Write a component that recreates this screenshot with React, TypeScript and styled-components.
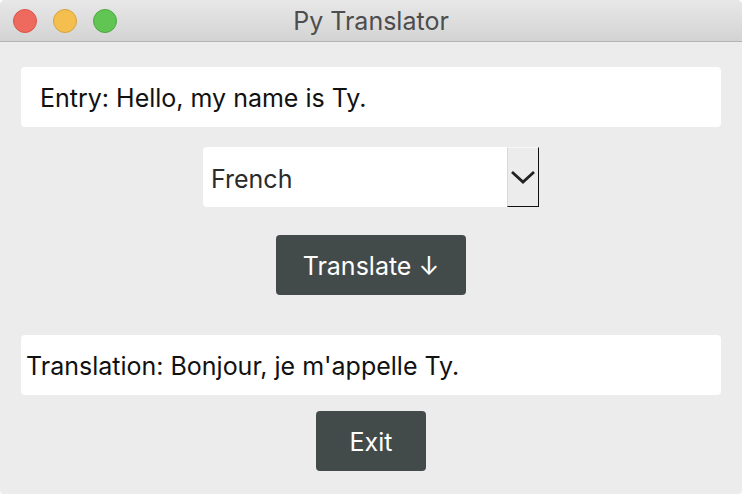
import React from "react";
import styled, { createGlobalStyle } from "styled-components";

const Global = createGlobalStyle`
  html, body { margin: 0; padding: 0; background: #ffffff; }
  body { font-family: Inter, "Noto Sans", "Liberation Sans", sans-serif; }
`;

const Window = styled.div`
  width: 742px;
  height: 494px;
  background: #ececec;
  border-radius: 5px 5px 4px 4px;
  overflow: hidden;
  display: flex;
  flex-direction: column;
`;

const TitleBar = styled.div`
  height: 41px;
  border-bottom: 1px solid #b3b3b3;
  background: linear-gradient(#e8e8e8, #d3d3d3);
  display: flex;
  align-items: center;
  position: relative;
  flex-shrink: 0;
`;

const Lights = styled.div`
  display: flex;
  gap: 16px;
  padding-left: 13px;
  padding-top: 1px;
`;

const Light = styled.span<{ $bg: string; $border: string }>`
  width: 24px;
  height: 24px;
  border-radius: 50%;
  background: ${(p) => p.$bg};
  border: 0.5px solid ${(p) => p.$border};
  box-sizing: border-box;
`;

const Title = styled.div`
  position: absolute;
  left: 0;
  right: 0;
  text-align: center;
  font-size: 25px;
  color: #4d4d4d;
  pointer-events: none;
`;

const Content = styled.div`
  display: flex;
  flex-direction: column;
  align-items: center;
  padding: 25px 21px 0;
`;

const Field = styled.div<{ $pad: number; $mt: number }>`
  align-self: stretch;
  height: 60px;
  box-sizing: border-box;
  padding-top: 1px;
  background: #ffffff;
  border-radius: 4px;
  display: flex;
  align-items: center;
  padding-left: ${(p) => p.$pad}px;
  margin-top: ${(p) => p.$mt}px;
  font-size: 25px;
  color: #111111;
`;

const Select = styled.div`
  margin-top: 20px;
  display: flex;
  height: 60px;
`;

const SelectValue = styled.div`
  width: 296px;
  padding-left: 8px;
  padding-top: 3px;
  box-sizing: content-box;
  background: #ffffff;
  border-radius: 4px 0 0 4px;
  display: flex;
  align-items: center;
  font-size: 25px;
  color: #2b2b2b;
`;

const SelectArrow = styled.div`
  width: 32px;
  box-sizing: border-box;
  background: #ececec;
  border-left: 1px solid #d8d8d8;
  border-top: 1px solid #f7f7f7;
  border-right: 1px solid #111;
  border-bottom: 1px solid #111;
  display: flex;
  align-items: center;
  justify-content: center;
`;

const Button = styled.button<{ $w: number; $mt: number }>`
  width: ${(p) => p.$w}px;
  height: 60px;
  margin-top: ${(p) => p.$mt}px;
  padding: 1px 0 0;
  background: #434b4a;
  border: none;
  border-radius: 4px;
  color: #ffffff;
  font-family: inherit;
  font-size: 25px;
`;

export default function App() {
  return (
    <>
      <Global />
      <Window>
        <TitleBar>
          <Lights>
            <Light $bg="#ee6a5f" $border="#d9544a" />
            <Light $bg="#f5bf4f" $border="#d6a23f" />
            <Light $bg="#61c554" $border="#4ea73f" />
          </Lights>
          <Title>Py Translator</Title>
        </TitleBar>
        <Content>
          <Field $pad={19} $mt={0}>Entry: Hello, my name is Ty.</Field>
          <Select>
            <SelectValue>French</SelectValue>
            <SelectArrow>
              <svg width="26" height="16" viewBox="0 0 26 16">
                <path d="M2 3 L13 13 L24 3" fill="none" stroke="#222" strokeWidth="2.8" />
              </svg>
            </SelectArrow>
          </Select>
          <Button $w={190} $mt={28}>Translate ↓</Button>
          <Field $pad={5} $mt={40}>Translation: Bonjour, je m'appelle Ty.</Field>
          <Button $w={110} $mt={16}>Exit</Button>
        </Content>
      </Window>
    </>
  );
}
